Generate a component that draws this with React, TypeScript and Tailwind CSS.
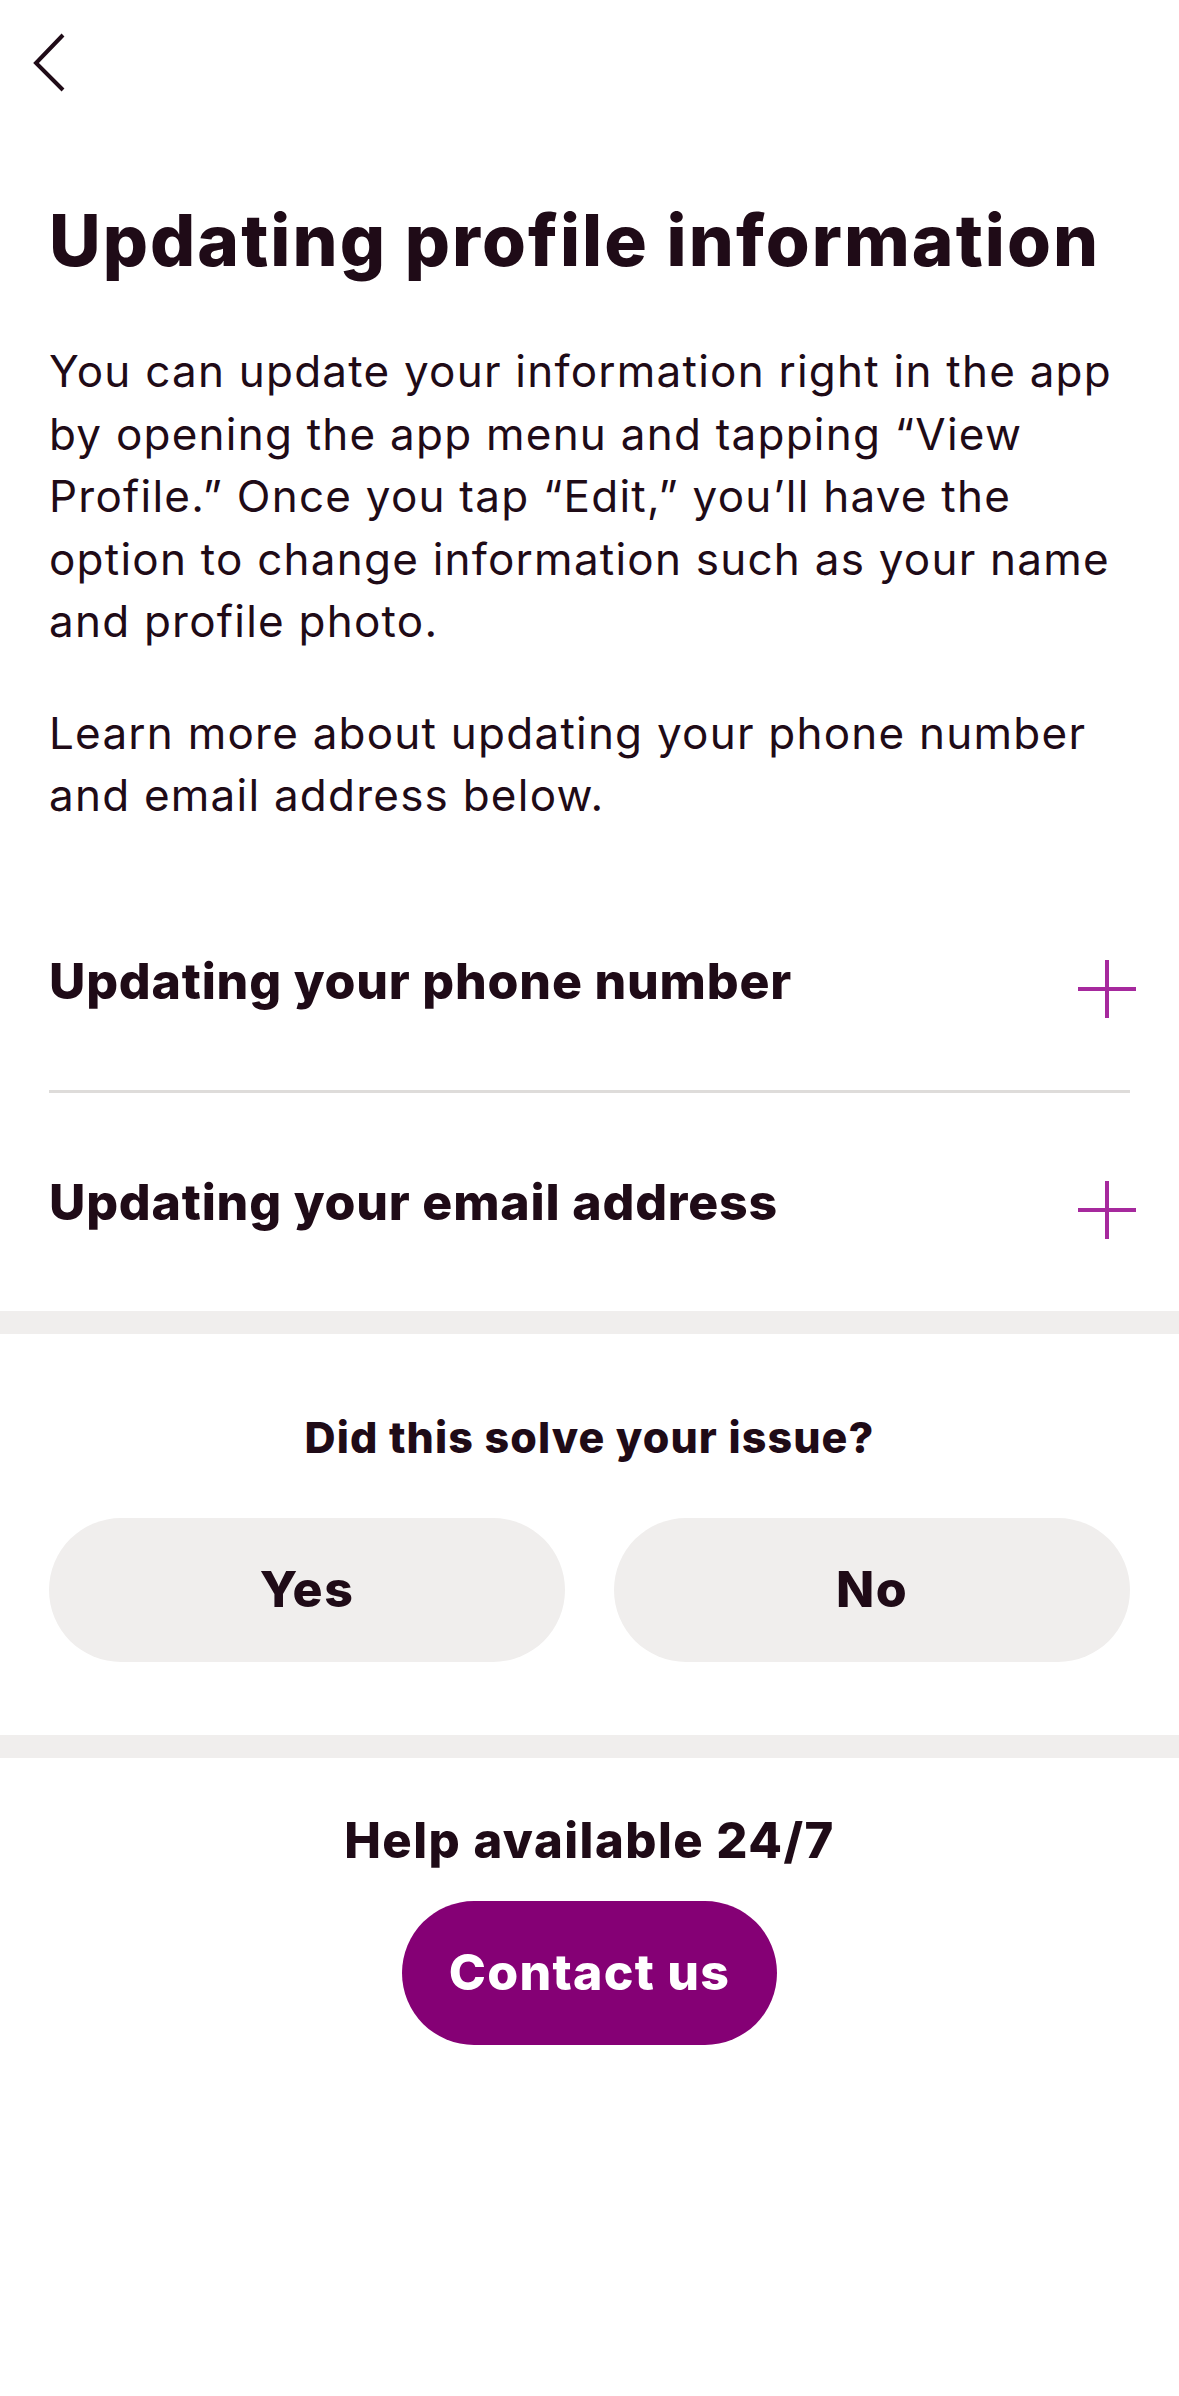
import React from "react";

function Plus() {
  return (
    <svg width="64" height="64" viewBox="0 0 64 64" className="-mr-[9px] mt-[16px] shrink-0">
      <path d="M32 3 V61 M3 32 H61" stroke="#a6299d" strokeWidth="4" fill="none" />
    </svg>
  );
}

export default function App() {
  return (
    <div className="min-h-[2396px] w-full bg-white font-['Inter',sans-serif] text-[#1f0b17]">
      <div className="h-[200px] pl-[33px] pt-[33px]">
        <svg width="34" height="60" viewBox="0 0 34 60">
          <path d="M30 2 L3 30 L30 57" stroke="#1f0b17" strokeWidth="4" fill="none" />
        </svg>
      </div>
      <div className="px-[49px]">
        <h1 className="whitespace-nowrap text-[71px] font-extrabold leading-[80px] tracking-[0.029em]">
          Updating profile information
        </h1>
        <p className="mt-[60px] text-[44px] leading-[62.5px] tracking-[0.028em]">
          You can update your information right in the app
          <br />
          by opening the app menu and tapping “View
          <br />
          Profile.” Once you tap “Edit,” you’ll have the
          <br />
          option to change information such as your name
          <br />
          and profile photo.
        </p>
        <p className="mt-[49px] text-[44px] leading-[62.5px] tracking-[0.028em]">
          Learn more about updating your phone number
          <br />
          and email address below.
        </p>
        <div className="mt-[45px]">
          <div className="flex h-[218px] items-center justify-between">
            <span className="text-[50px] font-extrabold leading-[56px] tracking-[0.016em]">
              Updating your phone number
            </span>
            <Plus />
          </div>
          <div className="h-[3px] bg-[#dedcda]" />
          <div className="flex h-[218px] items-center justify-between">
            <span className="text-[50px] font-extrabold leading-[56px] tracking-[0.016em]">
              Updating your email address
            </span>
            <Plus />
          </div>
        </div>
      </div>
      <div className="h-[23px] bg-[#f0eeed]" />
      <div className="flex flex-col items-center px-[49px] pb-[73px] pt-[79px]">
        <div className="text-[43px] font-extrabold leading-[48px] tracking-[0.025em]">Did this solve your issue?</div>
        <div className="mt-[57px] grid w-full grid-cols-2 gap-[49px]">
          <button className="h-[144px] rounded-full bg-[#f0eeed] text-[50px] font-extrabold tracking-[0.03em] text-[#1f0b17]">
            Yes
          </button>
          <button className="h-[144px] rounded-full bg-[#f0eeed] text-[50px] font-extrabold tracking-[0.03em] text-[#1f0b17]">
            No
          </button>
        </div>
      </div>
      <div className="h-[23px] bg-[#f0eeed]" />
      <div className="flex flex-col items-center pt-[57px]">
        <div className="text-[49px] font-extrabold leading-[52px] tracking-[0.03em]">Help available 24/7</div>
        <button className="mt-[34px] h-[144px] w-[375px] rounded-full bg-[#850075] text-[50px] font-extrabold tracking-[0.025em] text-white">
          Contact us
        </button>
      </div>
    </div>
  );
}
